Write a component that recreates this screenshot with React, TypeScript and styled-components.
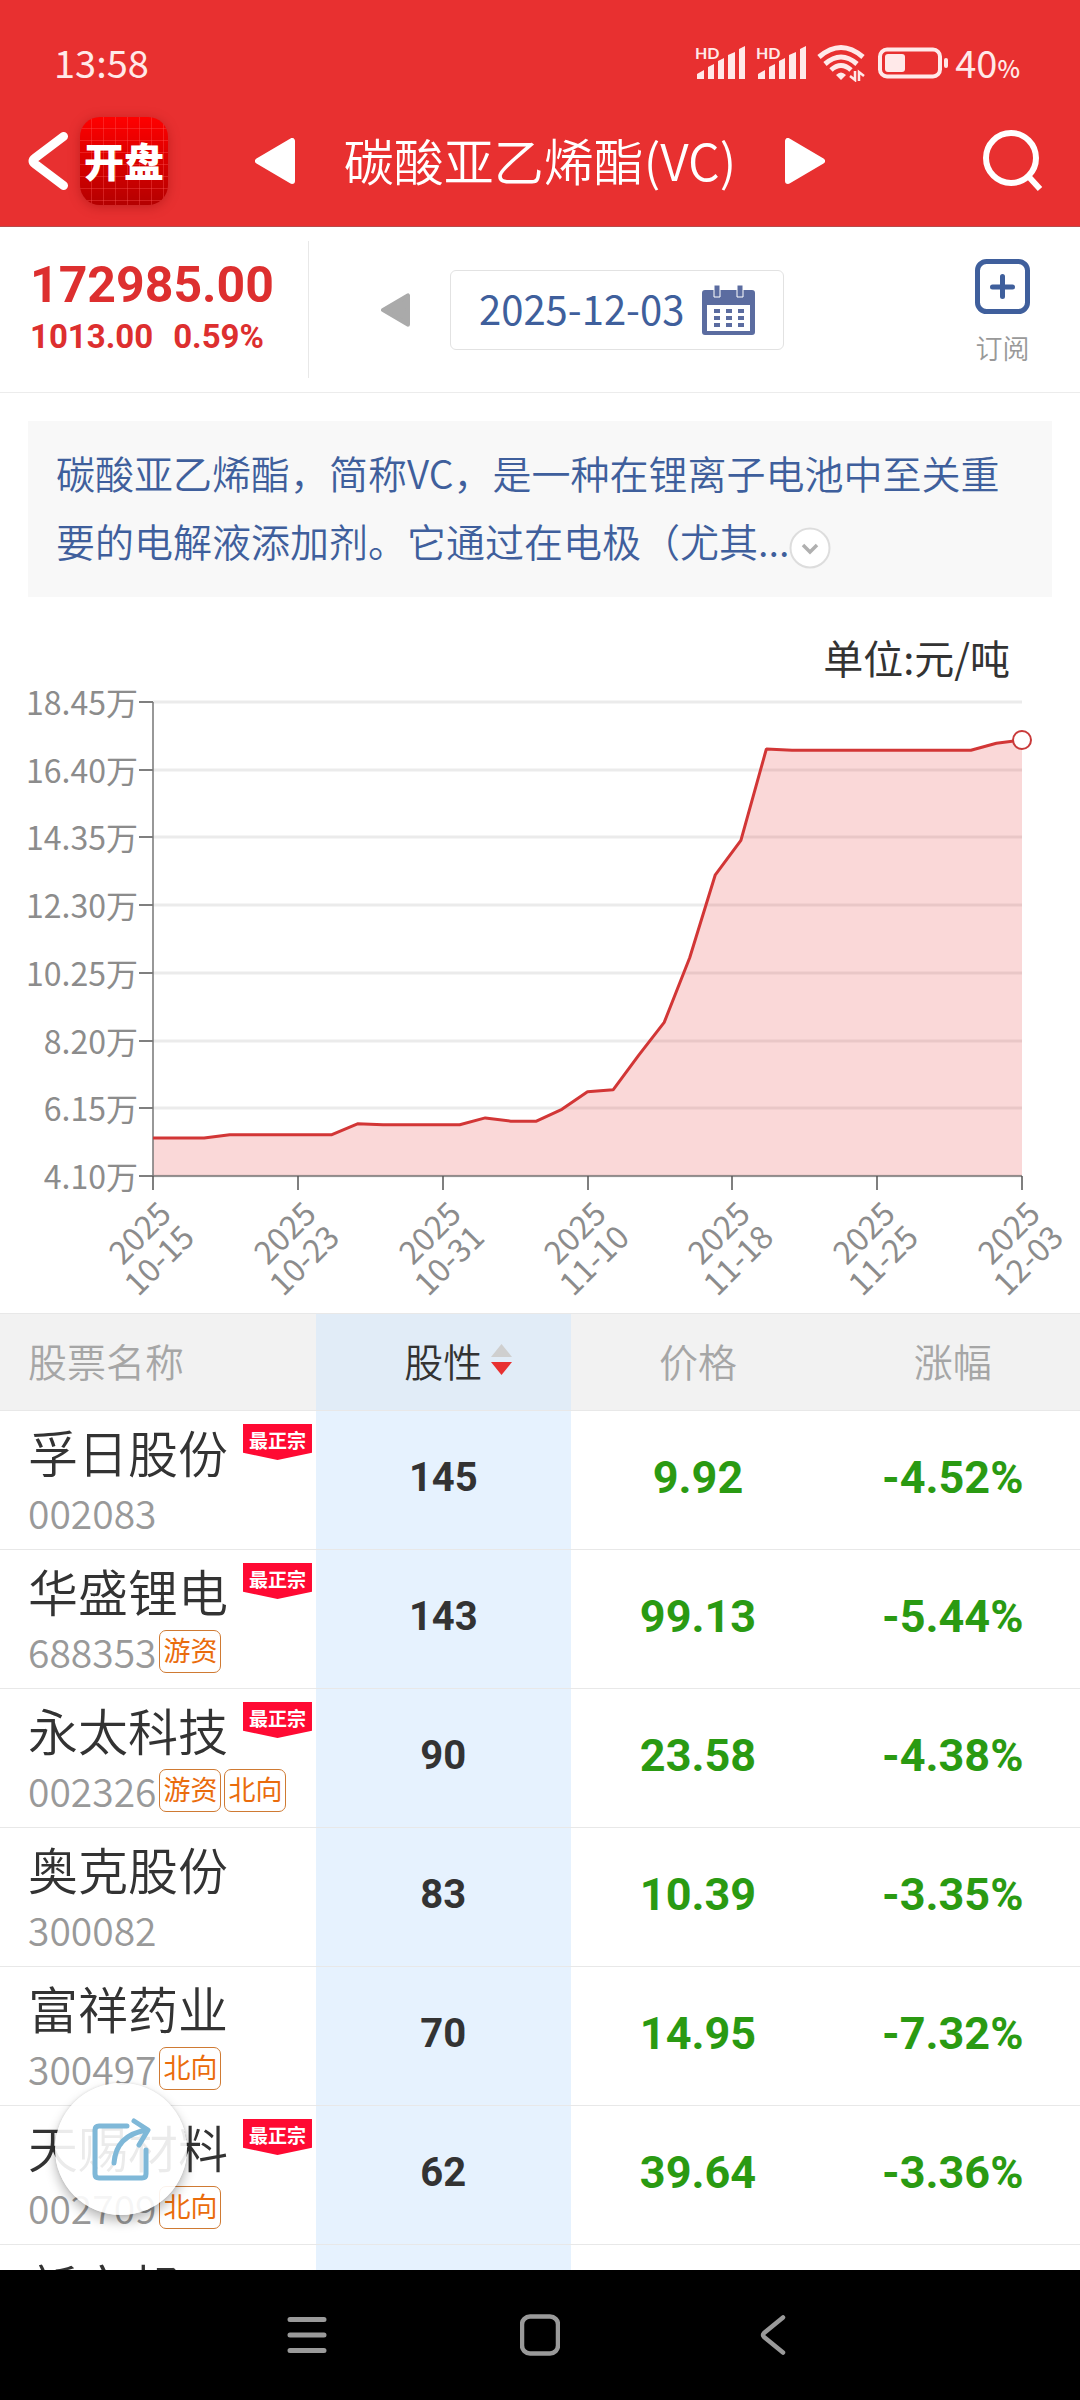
import React from "react";
import styled, { createGlobalStyle } from "styled-components";

const sans = `"Noto Sans CJK SC", "Noto Sans", sans-serif`;
const digits = `Roboto, "Noto Sans CJK SC", sans-serif`;

const GlobalStyle = createGlobalStyle`
  *, *::before, *::after { box-sizing: border-box; }
  body { margin: 0; background: #fff; font-family: ${sans}; color: #333; }
  button {
    margin: 0; padding: 0; border: 0; background: none;
    font: inherit; color: inherit; cursor: pointer;
  }
  h1, p { margin: 0; font-weight: inherit; }
  svg { display: block; flex: none; }
`;

const Screen = styled.div`
  display: flex;
  flex-direction: column;
  height: 100vh;
  overflow: hidden;
  background: #fff;
`;

/* ---------- header ---------- */

const Header = styled.header`
  flex: none;
  background: #e83030;
  color: #fff;
  border-bottom: 1px solid #b84a4a;
`;

const StatusBar = styled.div`
  display: flex;
  align-items: center;
  justify-content: space-between;
  height: 96px;
  padding: 30px 60px 0 54px;
  color: #ffe9e9;
  font-size: 38px;
  line-height: 1;
`;

const Clock = styled.span`
  padding-bottom: 2px;
`;

const StatusIcons = styled.div`
  display: flex;
  align-items: center;
  gap: 9px;
`;

const BatteryLevel = styled.span`
  display: flex;
  align-items: baseline;
  margin-left: -2px;
  padding-bottom: 2px;
`;

const Percent = styled.span`
  font-size: 24px;
  font-weight: 500;
`;

const Toolbar = styled.nav`
  display: grid;
  grid-template-columns: 1fr auto 1fr;
  align-items: center;
  height: 130px;
  padding: 0 28px;
`;

const ToolbarStart = styled.div`
  display: flex;
  align-items: center;
  gap: 12px;
`;

const TitleGroup = styled.div`
  display: flex;
  align-items: center;
  gap: 49px;
`;

const Title = styled.h1`
  padding-bottom: 4px;
  font-size: 50px;
  line-height: 64px;
  font-weight: 350;
  white-space: nowrap;
`;

const SearchButton = styled.button`
  justify-self: end;
  padding: 0 8px;
`;

const AppLogo = styled.span`
  display: grid;
  place-items: center;
  width: 88px;
  height: 88px;
  padding-bottom: 2px;
  border-radius: 20px;
  overflow: hidden;
  background-color: #d80000;
  background-image:
    repeating-linear-gradient(90deg, transparent 0 11px, rgba(255, 90, 90, 0.35) 11px 12px),
    repeating-linear-gradient(180deg, transparent 0 11px, rgba(255, 90, 90, 0.35) 11px 12px),
    linear-gradient(180deg, #ff0000, #b40000);
  box-shadow: 0 2px 12px rgba(120, 0, 0, 0.35);
  font-size: 40px;
  line-height: 48px;
  font-weight: 900;
`;

/* ---------- quote bar ---------- */

const QuoteBar = styled.section`
  display: flex;
  align-items: center;
  flex: none;
  height: 166px;
  border-bottom: 1px solid #ececec;
`;

const Quote = styled.div`
  width: 309px;
  height: 137px;
  padding: 16px 0 0 30px;
  border-right: 1px solid #e8e8e8;
  color: #dd2f2f;
  font-family: ${digits};
  font-weight: 700;
  white-space: nowrap;
`;

const QuotePrice = styled.p`
  font-size: 50px;
  line-height: 56px;
`;

const QuoteChange = styled.p`
  display: flex;
  gap: 20px;
  font-size: 33px;
  line-height: 48px;
`;

const DateGroup = styled.div`
  display: flex;
  align-items: center;
  gap: 40px;
  margin-left: 72px;
`;

const DateButton = styled.button`
  display: flex;
  align-items: center;
  gap: 18px;
  height: 80px;
  padding: 0 28px;
  border: 1px solid #e2e2e2;
  border-radius: 6px;
  color: #3f5f9c;
  font-size: 40px;
  line-height: 48px;
  white-space: nowrap;
`;

const DateText = styled.span`
  padding-bottom: 4px;
`;

const SubscribeButton = styled.button`
  display: flex;
  flex-direction: column;
  align-items: center;
  gap: 16px;
  margin: 0 50px 0 auto;
  padding-top: 6px;
  color: #999;
  font-size: 27px;
  line-height: 36px;
  font-weight: 350;
`;

/* ---------- description ---------- */

const Description = styled.section`
  flex: none;
  margin: 28px 28px 0;
  padding: 17px 28px 23px;
  background: #f8f8f8;
  color: #3f5f9c;
  font-size: 39px;
  line-height: 68px;
  font-weight: 350;
`;

const ExpandButton = styled.button`
  display: inline-block;
  padding-top: 4px;
  vertical-align: middle;
`;

/* ---------- chart ---------- */

const ChartSection = styled.section`
  flex: none;
  padding-top: 35px;
`;

const ChartUnit = styled.p`
  padding-right: 70px;
  text-align: right;
  font-size: 40px;
  line-height: 50px;
`;

const ChartSvg = styled.svg`
  width: 100%;
  height: auto;
  overflow: visible;
  font-family: ${sans};
  font-size: 32px;
`;

/* ---------- stock table ---------- */

const ListArea = styled.main`
  position: relative;
  flex: 1;
  min-height: 0;
  overflow: hidden;
`;

const Table = styled.table`
  width: 100%;
  table-layout: fixed;
  border-collapse: collapse;
`;

const HeadCell = styled.th<{ $active?: boolean }>`
  height: 97px;
  padding: 0 0 4px;
  border-top: 1px solid #e8e8e8;
  border-bottom: 1px solid #e8e8e8;
  background: ${(p) => (p.$active ? "#e1ecf7" : "#f2f2f2")};
  color: ${(p) => (p.$active ? "#333" : "#a6a6a6")};
  font-size: 39px;
  line-height: 48px;
  font-weight: 350;
  text-align: center;

  &:first-child {
    padding-left: 28px;
    text-align: left;
  }
`;

const SortButton = styled.button`
  display: inline-flex;
  align-items: center;
  gap: 9px;
  padding-left: 30px;
`;

const Row = styled.tr`
  height: 139px;
  border-bottom: 1px solid #e8e8e8;
`;

const StockCell = styled.td`
  padding: 0 0 0 28px;
  vertical-align: top;
`;

const StockTop = styled.div`
  display: flex;
  justify-content: space-between;
  align-items: flex-start;
  height: 73px;
  padding: 13px 4px 0 0;
`;

const StockName = styled.span`
  font-size: 50px;
  line-height: 54px;
  font-weight: 350;
  white-space: nowrap;
`;

const Ribbon = styled.span`
  width: 69px;
  height: 36px;
  padding-top: 4px;
  background: #ff0a33;
  clip-path: polygon(0 0, 100% 0, 100% 80%, 50% 100%, 0 80%);
  color: #fff;
  font-size: 19px;
  line-height: 24px;
  font-weight: 700;
  text-align: center;
`;

const StockMeta = styled.div`
  display: flex;
  align-items: center;
  gap: 3px;
  height: 56px;
  color: #999;
  font-size: 39px;
  line-height: 48px;
  font-weight: 350;
`;

const Tag = styled.span`
  height: 43px;
  padding: 0 3px;
  border: 1px solid #cf7a33;
  border-radius: 7px;
  color: #ea6c0c;
  font-size: 27px;
  line-height: 38px;
  font-weight: 400;
`;

const NumberCell = styled.td<{ $kind: "score" | "quote" }>`
  padding: 0 0 6px;
  background: ${(p) => (p.$kind === "score" ? "#e6f2fe" : "transparent")};
  color: ${(p) => (p.$kind === "score" ? "#333" : "#2a9a12")};
  font-family: ${digits};
  font-size: ${(p) => (p.$kind === "score" ? 40 : 45)}px;
  font-weight: 700;
  text-align: center;
`;

const ShareButton = styled.button`
  position: absolute;
  left: 55px;
  bottom: 55px;
  display: grid;
  place-items: center;
  width: 132px;
  height: 132px;
  border-radius: 50%;
  background: rgba(255, 255, 255, 0.9);
  box-shadow: 0 6px 12px rgba(0, 0, 0, 0.28), 0 0 3px rgba(0, 0, 0, 0.12);
`;

/* ---------- system navigation ---------- */

const SystemNav = styled.footer`
  display: grid;
  grid-template-columns: repeat(3, 1fr);
  flex: none;
  height: 130px;
  padding: 0 190px;
  background: #000;
`;

const SystemButton = styled.button`
  display: grid;
  place-items: center;
`;

/* ---------- icons ---------- */

const Signal = () => (
  <svg width="52" height="44" viewBox="0 -4 52 44" fill="currentColor">
    <text x="0" y="14" fontSize="16" fontWeight="700" fontFamily="Lato, sans-serif">HD</text>
    <path d="M2 34v-5l7-4v9zM13 34V22l6-3v15zM23 34V16l6-3v21zM33 34V10l7-3v27zM44 34V4l6-3v33z" />
  </svg>
);

const Wifi = () => (
  <svg width="52" height="38" viewBox="0 0 52 38" fill="none" stroke="currentColor" strokeWidth="5">
    <path d="M2 13Q24-6 46 13M8 20Q24 6 40 20M14 26Q24 17 34 26" />
    <path d="M19 31q5-5 10 0l-5 5z" fill="currentColor" stroke="none" />
    <path d="M33 32l5 4v-9M42 37v-9l5 4" strokeWidth="2.5" />
  </svg>
);

const Battery = () => (
  <svg width="70" height="32" viewBox="0 0 70 32">
    <rect x="2" y="2.500" width="60" height="27" rx="7" fill="none" stroke="currentColor" strokeWidth="4" />
    <rect x="7" y="7" width="20" height="18" rx="3" fill="currentColor" />
    <rect x="66" y="11" width="4" height="10" rx="2" fill="currentColor" />
  </svg>
);

const BackIcon = () => (
  <svg width="40" height="60" viewBox="0 0 40 60" fill="none" stroke="#fff" strokeWidth="9" strokeLinecap="round" strokeLinejoin="round">
    <path d="M35.500 5.500 7 27q-4 3 0 6l28.500 21.500" />
  </svg>
);

const Triangle = ({ width, height, color, flip }: { width: number; height: number; color: string; flip?: boolean }) => (
  <svg width={width} height={height} viewBox="0 0 40 46">
    <path
      d="M37 3v40L3 23z"
      fill={color}
      stroke={color}
      strokeWidth="6"
      strokeLinejoin="round"
      transform={flip ? "matrix(-1 0 0 1 40 0)" : undefined}
    />
  </svg>
);

const SearchIcon = () => (
  <svg width="62" height="62" viewBox="0 0 62 62" fill="none" stroke="#fff" strokeWidth="6">
    <circle cx="29" cy="28" r="25" />
    <path d="M47 47l11 12" />
  </svg>
);

const CalendarIcon = () => (
  <svg width="53" height="50" viewBox="0 0 53 50" fill="#5b6ca0">
    <path fillRule="evenodd" d="M3 5h47q3 0 3 3v39q0 3-3 3H3q-3 0-3-3V8q0-3 3-3zM5 20v26h43V20z" />
    <path d="M12 0h6v12h-6zM35 0h6v12h-6z" stroke="#fff" strokeWidth="1" />
    <path d="M12 24h6v4h-6zM24 24h6v4h-6zM36 24h6v4h-6zM12 31h6v4h-6zM24 31h6v4h-6zM36 31h6v4h-6zM12 38h6v4h-6zM24 38h6v4h-6zM36 38h6v4h-6z" />
  </svg>
);

const PlusBoxIcon = () => (
  <svg width="55" height="55" viewBox="0 0 55 55" fill="none" stroke="#3f5f9c" strokeWidth="5">
    <rect x="2.500" y="2.500" width="50" height="50" rx="9" />
    <path d="M27.500 17.500v20M17.500 28h20" strokeLinecap="round" />
  </svg>
);

const ExpandIcon = () => (
  <svg width="42" height="42" viewBox="0 0 42 42" fill="none">
    <circle cx="21" cy="21" r="19.500" fill="#fff" stroke="#ddd" strokeWidth="2" />
    <path d="M14 18l7 7 7-7" stroke="#b0b0b0" strokeWidth="3.500" />
  </svg>
);

const SortArrows = () => (
  <svg width="21" height="32" viewBox="0 0 21 32">
    <path d="M10.500 0 21 13H0z" fill="#cfcfcf" />
    <path d="M0 18h21L10.500 31z" fill="#e83030" />
  </svg>
);

const ShareIcon = () => (
  <svg width="60" height="64" viewBox="2 0 60 64" fill="none" stroke="#7fb8d8" strokeWidth="5" strokeLinecap="round" strokeLinejoin="round">
    <path d="M38 9H10q-4 0-4 4v44q0 4 4 4h43q4 0 4-4V33" />
    <path d="M25 46q2-28 33-33M45 4l14 9-9 15" />
  </svg>
);

/* ---------- chart ---------- */

const prices = [
  5.25, 5.25, 5.25, 5.35, 5.35, 5.35, 5.35, 5.35, 5.68, 5.65, 5.65, 5.65, 5.65, 5.86, 5.76, 5.76, 6.12, 6.65,
  6.71, 7.75, 8.75, 10.71, 13.22, 14.26, 17.03, 16.99, 16.99, 16.99, 16.99, 16.99, 16.99, 16.99, 16.99, 17.2, 17.3,
];
const yTicks = [18.45, 16.4, 14.35, 12.3, 10.25, 8.2, 6.15, 4.1];
const dates = ["10-15", "10-23", "10-31", "11-10", "11-18", "11-25", "12-03"];
const plot = { left: 153, right: 1022, top: 20, bottom: 494 };

const toX = (share: number) => plot.left + share * (plot.right - plot.left);
const toY = (value: number) => plot.bottom - ((value - 4.1) / 14.35) * (plot.bottom - plot.top);

const PriceChart = () => {
  const points = prices.map((v, i) => `${toX(i / (prices.length - 1)).toFixed(1)},${toY(v).toFixed(1)}`).join(" ");
  return (
    <ChartSvg viewBox="0 0 1080 631" role="img" aria-label="价格走势">
      {yTicks.map((t) => {
        const y = Math.round(toY(t));
        return (
          <g key={t}>
            <path d={`M${plot.left} ${y}H${plot.right}`} stroke="#ebebeb" strokeWidth="3" />
            <path d={`M139 ${y}H${plot.left}`} stroke="#555" strokeWidth="1.500" />
            <text x="138" y={y + 13} textAnchor="end" fill="#8c8c8c">{t.toFixed(2)}万</text>
          </g>
        );
      })}
      <polygon points={`${plot.left},${plot.bottom} ${points} ${plot.right},${plot.bottom}`} fill="#e33030" fillOpacity="0.19" />
      <path d={`M${plot.left} ${plot.top}V${plot.bottom}H${plot.right}`} fill="none" stroke="#777" strokeWidth="1.500" />
      <polyline points={points} fill="none" stroke="#d23636" strokeWidth="3" strokeLinejoin="bevel" />
      <circle cx={plot.right} cy={toY(17.3)} r="9" fill="#fff" stroke="#c93a3a" strokeWidth="2" />
      {dates.map((d, i) => {
        const x = Math.round(toX(i / (dates.length - 1)));
        return (
          <g key={d} fill="#8c8c8c">
            <path d={`M${x} ${plot.bottom}v14`} stroke="#555" strokeWidth="1.500" />
            <g transform={`translate(${x + 20} ${plot.bottom + 40}) rotate(-45)`}>
              <text textAnchor="end">2025</text>
              <text y="33" textAnchor="end">{d}</text>
            </g>
          </g>
        );
      })}
    </ChartSvg>
  );
};

/* ---------- data ---------- */

type Stock = {
  name: string;
  code?: string;
  tags?: string[];
  genuine?: boolean;
  score?: number;
  price?: string;
  change?: string;
};

const stocks: Stock[] = [
  { name: "孚日股份", code: "002083", genuine: true, score: 145, price: "9.92", change: "-4.52%" },
  { name: "华盛锂电", code: "688353", tags: ["游资"], genuine: true, score: 143, price: "99.13", change: "-5.44%" },
  { name: "永太科技", code: "002326", tags: ["游资", "北向"], genuine: true, score: 90, price: "23.58", change: "-4.38%" },
  { name: "奥克股份", code: "300082", score: 83, price: "10.39", change: "-3.35%" },
  { name: "富祥药业", code: "300497", tags: ["北向"], score: 70, price: "14.95", change: "-7.32%" },
  { name: "天赐材料", code: "002709", tags: ["北向"], genuine: true, score: 62, price: "39.64", change: "-3.36%" },
  { name: "新宙邦" },
];

const App = () => (
  <Screen>
    <GlobalStyle />
    <Header>
      <StatusBar>
        <Clock>13:58</Clock>
        <StatusIcons>
          <Signal />
          <Signal />
          <Wifi />
          <Battery />
          <BatteryLevel>40<Percent>%</Percent></BatteryLevel>
        </StatusIcons>
      </StatusBar>
      <Toolbar>
        <ToolbarStart>
          <button aria-label="返回"><BackIcon /></button>
          <AppLogo>开盘</AppLogo>
        </ToolbarStart>
        <TitleGroup>
          <button aria-label="上一个"><Triangle width={40} height={46} color="#fff" /></button>
          <Title>碳酸亚乙烯酯(VC)</Title>
          <button aria-label="下一个"><Triangle width={40} height={46} color="#fff" flip /></button>
        </TitleGroup>
        <SearchButton aria-label="搜索"><SearchIcon /></SearchButton>
      </Toolbar>
    </Header>

    <QuoteBar>
      <Quote>
        <QuotePrice>172985.00</QuotePrice>
        <QuoteChange><span>1013.00</span><span>0.59%</span></QuoteChange>
      </Quote>
      <DateGroup>
        <button aria-label="前一天"><Triangle width={29} height={38} color="#aaa" /></button>
        <DateButton><DateText>2025-12-03</DateText><CalendarIcon /></DateButton>
      </DateGroup>
      <SubscribeButton><PlusBoxIcon />订阅</SubscribeButton>
    </QuoteBar>

    <Description>
      碳酸亚乙烯酯，简称VC，是一种在锂离子电池中至关重要的电解液添加剂。它通过在电极（尤其...<ExpandButton aria-label="展开"><ExpandIcon /></ExpandButton>
    </Description>

    <ChartSection>
      <ChartUnit>单位:元/吨</ChartUnit>
      <PriceChart />
    </ChartSection>

    <ListArea>
      <Table>
        <colgroup>
          <col style={{ width: `${(316 / 1080) * 100}%` }} />
          <col />
          <col />
          <col />
        </colgroup>
        <thead>
          <tr>
            <HeadCell>股票名称</HeadCell>
            <HeadCell $active><SortButton>股性<SortArrows /></SortButton></HeadCell>
            <HeadCell>价格</HeadCell>
            <HeadCell>涨幅</HeadCell>
          </tr>
        </thead>
        <tbody>
          {stocks.map((s) => (
            <Row key={s.name}>
              <StockCell>
                <StockTop>
                  <StockName>{s.name}</StockName>
                  {s.genuine && <Ribbon>最正宗</Ribbon>}
                </StockTop>
                <StockMeta>
                  {s.code && <span>{s.code}</span>}
                  {s.tags?.map((t) => <Tag key={t}>{t}</Tag>)}
                </StockMeta>
              </StockCell>
              <NumberCell $kind="score">{s.score}</NumberCell>
              <NumberCell $kind="quote">{s.price}</NumberCell>
              <NumberCell $kind="quote">{s.change}</NumberCell>
            </Row>
          ))}
        </tbody>
      </Table>
      <ShareButton aria-label="分享"><ShareIcon /></ShareButton>
    </ListArea>

    <SystemNav>
      <SystemButton aria-label="菜单">
        <svg width="40" height="40" viewBox="0 0 40 40" stroke="#9a9a9a" strokeWidth="5" strokeLinecap="round">
          <path d="M3 4.500h34M3 20h34M3 35.500h34" />
        </svg>
      </SystemButton>
      <SystemButton aria-label="主页">
        <svg width="40" height="42" viewBox="0 0 40 42" fill="none" stroke="#9a9a9a" strokeWidth="4.500">
          <rect x="2" y="2.500" width="36" height="37" rx="8" />
        </svg>
      </SystemButton>
      <SystemButton aria-label="后退">
        <svg width="28" height="42" viewBox="0 0 28 42" fill="none" stroke="#9a9a9a" strokeWidth="4.500" strokeLinecap="round" strokeLinejoin="round">
          <path d="M24 3.500 5 19q-2 2 0 4l19 15.500" />
        </svg>
      </SystemButton>
    </SystemNav>
  </Screen>
);

export default App;
